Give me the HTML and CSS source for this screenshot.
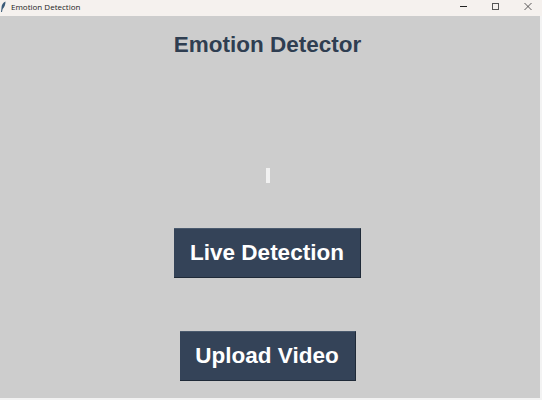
FILE: index.html
```html
<!DOCTYPE html>
<html lang="en">
<head>
    <meta charset="UTF-8">
    <title>Emotion Detection</title>
    <link rel="stylesheet" href="styles.css">
</head>
<body>
    <div class="titlebar">
        <div class="title-left">
            <svg class="app-icon" width="6" height="12" viewBox="0 0 6 12">
                <path d="M5.5 0.5 C3 1.5 1.5 4 1.5 7 L1 11 L2 11 L2.6 8 C4.5 6.5 5.5 3.5 5.5 0.5 Z" fill="#3a5a78"/>
            </svg>
            <span class="window-title">Emotion Detection</span>
        </div>
        <div class="window-controls">
            <svg width="8" height="8" viewBox="0 0 8 8"><path d="M0 3.5 H7" stroke="#222" stroke-width="1"/></svg>
            <svg width="8" height="8" viewBox="0 0 8 8"><rect x="0.5" y="0.5" width="6" height="6" fill="none" stroke="#555" stroke-width="1"/></svg>
            <svg width="8" height="8" viewBox="0 0 8 8"><path d="M0.5 0 L7.5 7 M7.5 0 L0.5 7" stroke="#333" stroke-width="0.8"/></svg>
        </div>
    </div>
    <main class="app">
        <h1>Emotion Detector</h1>
        <div class="video-placeholder"></div>
        <button class="big-btn live">Live Detection</button>
        <button class="big-btn upload">Upload Video</button>
    </main>
</body>
</html>
```

FILE: styles.css
```css
html, body {
    margin: 0;
    padding: 0;
    height: 400px;
    overflow: hidden;
}
body {
    font-family: "Liberation Sans", Arial, sans-serif;
    background-color: #f3f3f3;
}
.titlebar {
    height: 16px;
    display: flex;
    justify-content: space-between;
    align-items: flex-start;
    background-color: #f5f1ee;
}
.title-left {
    display: flex;
    align-items: center;
    height: 13px;
}
.app-icon {
    margin-right: 5px;
}
.window-title {
    font-family: "Open Sans", sans-serif;
    font-size: 8px;
    color: #222;
}
.window-controls {
    display: flex;
    gap: 24px;
    padding: 3px 10px 0 0;
}
.app {
    box-sizing: border-box;
    width: 540px;
    height: 382px;
    display: flex;
    flex-direction: column;
    align-items: center;
    padding-right: 5px;
    overflow: hidden;
    background-color: #cdcdcd;
}
h1 {
    margin: 16px 0 0;
    font-size: 22.5px;
    line-height: 25px;
    font-weight: bold;
    color: #2f3e51;
}
.video-placeholder {
    width: 4px;
    height: 15px;
    margin-top: 111px;
    background-color: #f1f1f1;
}
.big-btn {
    display: block;
    flex-shrink: 0;
    padding: 0;
    border: none;
    border-bottom: 1px solid #1f2a38;
    border-right: 1px solid #1f2a38;
    border-top: 1px solid #4a5a6e;
    background-color: #344358;
    color: #fff;
    font-family: "Liberation Sans", Arial, sans-serif;
    font-size: 22.5px;
    font-weight: bold;
    height: 50px;
}
.live {
    width: 187px;
    margin-top: 45px;
}
.upload {
    width: 176px;
    margin-top: 53px;
}
```
